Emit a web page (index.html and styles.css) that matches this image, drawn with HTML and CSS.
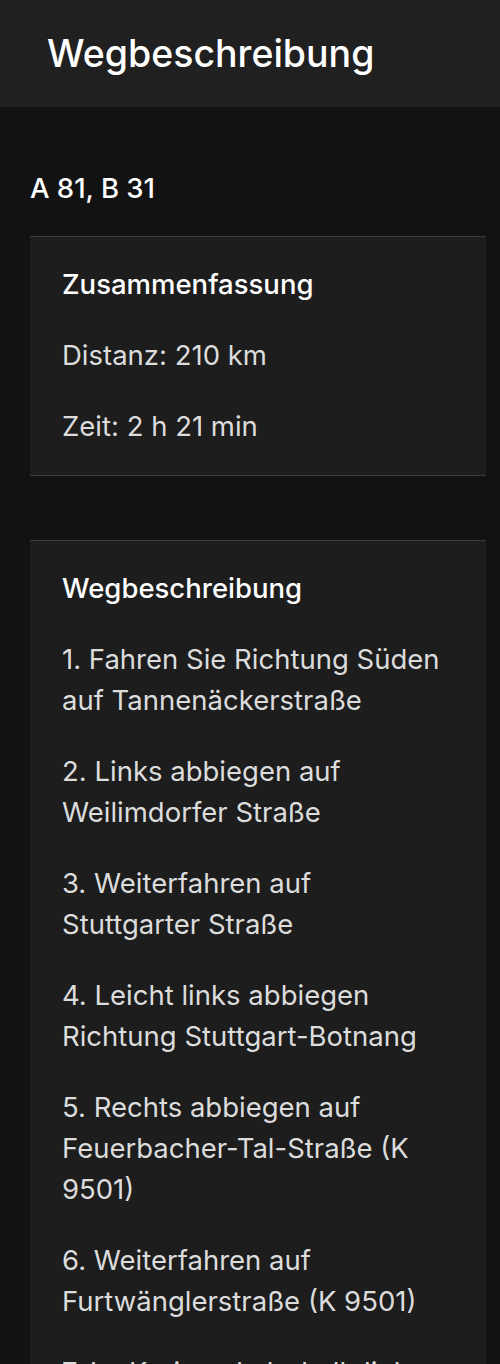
FILE: index.html
```html
<!DOCTYPE html>
<html lang="de">
<head>
<meta charset="utf-8">
<title>Wegbeschreibung</title>
<link rel="stylesheet" href="styles.css">
</head>
<body>
<header class="topbar">
  <h1 class="topbar-title">Wegbeschreibung</h1>
</header>
<main class="content">
  <h2 class="route">A 81, B 31</h2>
  <section class="card">
    <h3 class="card-title">Zusammenfassung</h3>
    <p class="line">Distanz: 210 km</p>
    <p class="line">Zeit: 2 h 21 min</p>
  </section>
  <section class="card">
    <h3 class="card-title">Wegbeschreibung</h3>
    <p class="line">1. Fahren Sie Richtung Süden auf Tannenäckerstraße</p>
    <p class="line">2. Links abbiegen auf Weilimdorfer Straße</p>
    <p class="line">3. Weiterfahren auf Stuttgarter Straße</p>
    <p class="line">4. Leicht links abbiegen Richtung Stuttgart-Botnang</p>
    <p class="line">5. Rechts abbiegen auf Feuerbacher-Tal-Straße (K 9501)</p>
    <p class="line">6. Weiterfahren auf Furtwänglerstraße (K 9501)</p>
    <p class="line">7. Im Kreisverkehr halb links weiter</p>
  </section>
</main>
</body>
</html>
```
FILE: styles.css
```css
html, body {
  margin: 0;
  padding: 0;
  background: #121212;
  color: #fff;
  font-family: Inter, "Noto Sans", "Liberation Sans", sans-serif;
}
.topbar {
  height: 107px;
  background: #202020;
  display: flex;
  align-items: center;
  padding-left: 47px;
}
.topbar-title {
  margin: 0;
  font-size: 37.5px;
  font-weight: 500;
  color: #fff;
}
.content {
  padding: 61px 14px 0 30px;
}
.route {
  margin: 0 0 27px;
  font-size: 27.5px;
  line-height: 41px;
  font-weight: 500;
}
.card {
  background: #1d1d1d;
  border-top: 1px solid #3a3a3a;
  border-bottom: 1px solid #3a3a3a;
  padding: 27px 40px 28px 32px;
  margin-bottom: 64px;
}
.card-title {
  margin: 0 0 30px;
  font-size: 27.5px;
  line-height: 41px;
  font-weight: 500;
  color: #fff;
}
.line {
  margin: 0 0 30px;
  font-size: 27.5px;
  line-height: 41px;
  color: #dcdcdc;
}
.line:last-child {
  margin-bottom: 0;
}
```
